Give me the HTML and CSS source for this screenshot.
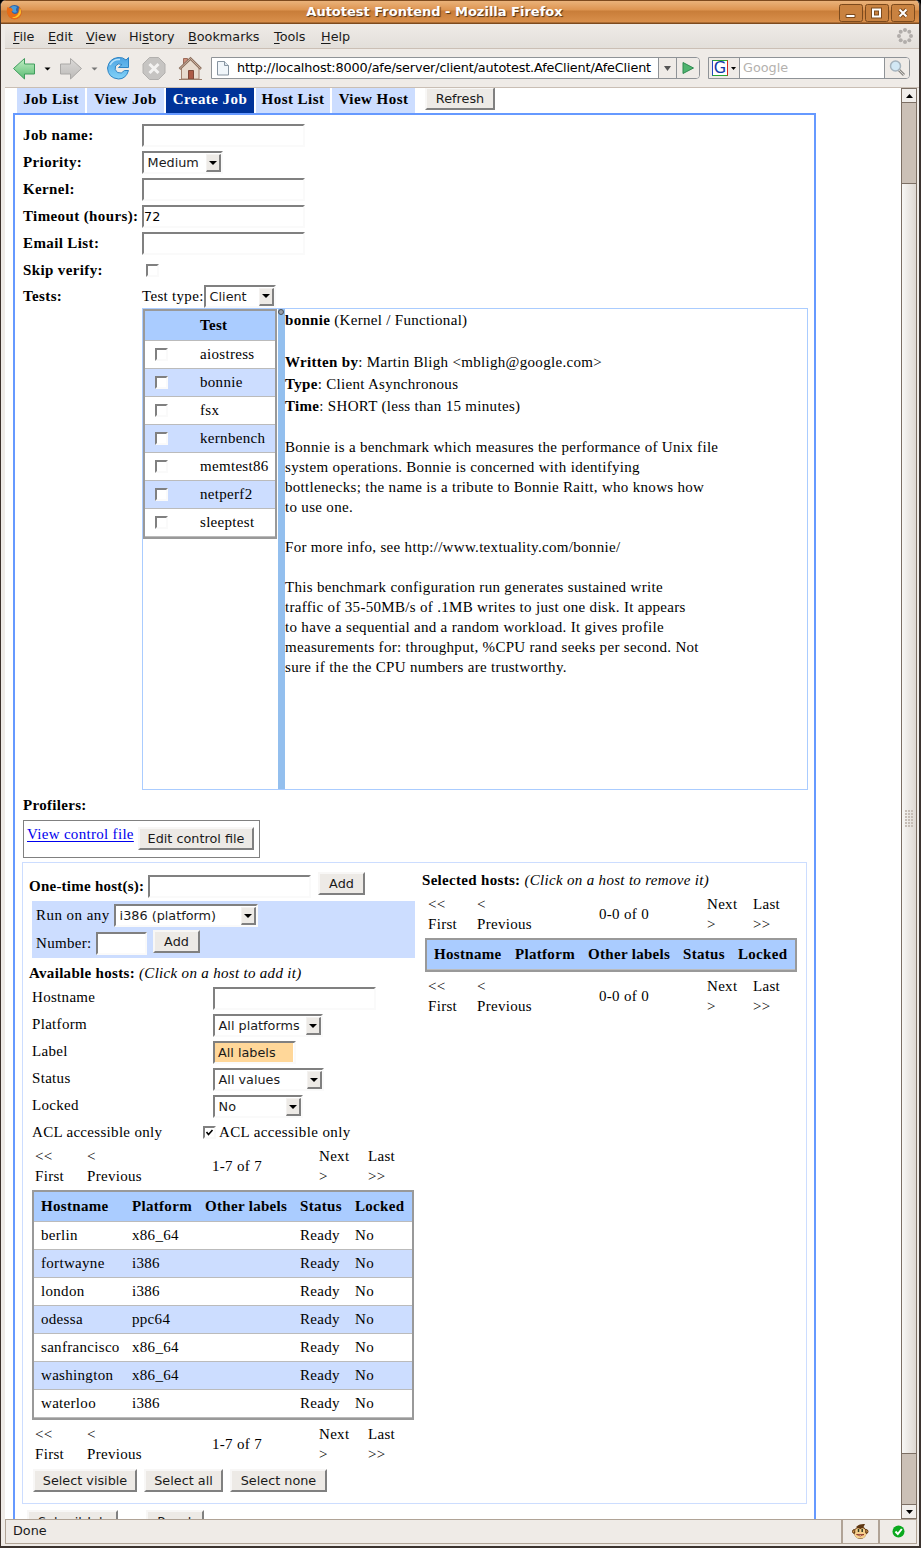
FILE: index.html
```html
<!DOCTYPE html>
<html lang="en">
<head>
<meta charset="utf-8">
<title>Autotest Frontend</title>
<link rel="stylesheet" href="styles.css">
</head>
<body>
<div class="window">
  <header class="titlebar">
    <svg class="fox" width="17" height="17" viewBox="0 0 17 17"><circle cx="8.5" cy="8" r="7" fill="#2e62a8"/><path d="M5 3 Q8 1 11 3 Q9 6 11 8 Q8 10 6 7Z" fill="#4c9bd8"/><path d="M1.5 3 Q3 4 5 3.500 L7 6 L5.500 7.500 Q7 11 11 9.500 Q13 8 12.500 5 L13.500 2.500 Q18 9 13.500 13.500 Q8 17.500 3 13 Q-.5 9 1.500 3Z" fill="#e96b14"/><path d="M14 4 Q16.500 9 12.500 12.500 Q9 15 6 13.500 Q13 13 14 4Z" fill="#fbc32c"/></svg>
    <div class="wintitle">Autotest Frontend - Mozilla Firefox</div>
    <div class="winbtns">
      <svg width="24" height="18"><rect x=".5" y=".5" width="23" height="17" rx="2"/><path d="M7 10.500h9v3h-9z" class="sym"/></svg>
      <svg width="24" height="18"><rect x=".5" y=".5" width="23" height="17" rx="2"/><path d="M8 5.500h7v7h-7z" class="symdark"/><path d="M8 5.500h7v7h-7z" class="symline"/></svg>
      <svg width="24" height="18"><rect x=".5" y=".5" width="23" height="17" rx="2"/><path d="M8.500 5.500l7 7m0-7l-7 7" class="symdark"/><path d="M8.500 5.500l7 7m0-7l-7 7" class="symline"/></svg>
    </div>
  </header>
  <nav class="menubar">
    <span class="m1"><u>F</u>ile</span><span class="m2"><u>E</u>dit</span><span class="m3"><u>V</u>iew</span><span class="m4">Hi<u>s</u>tory</span><span class="m5"><u>B</u>ookmarks</span><span class="m6"><u>T</u>ools</span><span class="m7"><u>H</u>elp</span>
    <svg class="throbber" width="16" height="16" viewBox="0 0 16 16" fill="#b1adaa"><circle cx="8" cy="2" r="2"/><circle cx="12.300" cy="3.700" r="2"/><circle cx="14" cy="8" r="2"/><circle cx="12.300" cy="12.300" r="2"/><circle cx="8" cy="14" r="2"/><circle cx="3.700" cy="12.300" r="2"/><circle cx="2" cy="8" r="2"/><circle cx="3.700" cy="3.700" r="2"/></svg>
  </nav>
  <div class="toolbar">
    <svg class="navicons" width="200" height="30" viewBox="0 0 200 30">
      <defs>
        <linearGradient id="gr" x2="0" y2="1"><stop offset="0" stop-color="#c4efc5"/><stop offset="1" stop-color="#58bb72"/></linearGradient>
        <linearGradient id="gy" x2="0" y2="1"><stop offset="0" stop-color="#dcdad8"/><stop offset="1" stop-color="#bcbab8"/></linearGradient>
        <linearGradient id="bl" x2="0" y2="1"><stop offset="0" stop-color="#4da3e2"/><stop offset="1" stop-color="#82d2f8"/></linearGradient>
      </defs>
      <path d="M8.500 15.500L19.500 5.500v5.500h10v10h-10v5z" fill="url(#gr)" stroke="#3f9c5d"/>
      <path d="M39.500 14.500h6l-3 3z" fill="#000"/>
      <path d="M76.500 15.500L65.500 5.500v5.500h-10v10h10v5z" fill="url(#gy)" stroke="#aaa8a6"/>
      <path d="M86.500 14.500h6l-3 3z" fill="#777"/>
      <path d="M121 7L123.500 4.500V14.500H113.500L117 11.500Q113 9.500 110.500 13Q109 17 112.500 19.500Q116.500 21.500 119.500 17.500H123.500Q121 26 113.500 26Q103 25 102.500 15Q104 5.500 113 4.500Q118 4 121 7Z" fill="url(#bl)" stroke="#2e84c4"/>
      <path d="M105 12Q108 6 115 6.500" fill="none" stroke="#b9e2fa" stroke-width="1.500"/>
      <path d="M144.500 4.500h9l6.500 6.500v9l-6.500 6.500h-9L138 20v-9z" fill="#c6c4c2" stroke="#b2b0ae"/><path d="M144.500 11l9 9m0-9l-9 9" stroke="#f3f2f1" stroke-width="3"/>
      <path d="M178.500 5.500h4v8h-4z" fill="#cf8f7d" stroke="#9c6a58"/>
      <path d="M176.500 15v11h17.500V15L185.500 6z" fill="#e9dccf" stroke="#a58470"/>
      <path d="M174.500 16L185.500 5.500l10.500 10.500" fill="none" stroke="#8e7260" stroke-width="2.500"/><path d="M175 15.500L185.500 5.500l10 10" fill="none" stroke="#c9ae9c"/>
      <path d="M183.500 17.500h5v8.500h-5z" fill="#ad5a45" stroke="#7f4939"/><path d="M174 26.500h23" stroke="#9d7f6c"/>
    </svg>
    <div class="urlbar">
      <svg width="12" height="15" viewBox="0 0 12 15"><path d="M.5.5h7l4 4v9.500h-11z" fill="#f1f6fa" stroke="#8794a0"/><path d="M7.500.5v4h4" fill="#dce6ee" stroke="#8794a0"/></svg>
      <span class="url">http://localhost:8000/afe/server/client/autotest.AfeClient/AfeClient</span>
      <span class="urldrop"><svg width="7" height="5"><path d="M0 0h7L3.500 5z" fill="#555"/></svg></span>
      <span class="urlgo"><svg width="12" height="12"><path d="M1 .5v11L11.500 6z" fill="#4fb46f" stroke="#2f8a50"/></svg></span>
    </div>
    <div class="search">
      <span class="engine"><span class="glogo">G</span><svg width="5" height="3"><path d="M0 0h5L2.500 3z"/></svg></span>
      <span class="query">Google</span>
      <span class="mag"><svg width="17" height="17"><path d="M10 10l5 5" stroke="#8c8986" stroke-width="3"/><path d="M10 10l5 5" stroke="#d5d3d0" stroke-width="1"/><circle cx="6.500" cy="6" r="5" fill="#d2e8f5" stroke="#a5b3bd" stroke-width="1.500"/></svg></span>
    </div>
  </div>
  <div class="viewport">
    <main class="page">
      <div class="tabs">
        <a class="t1">Job List</a><a class="t2">View Job</a><a class="t3 active">Create Job</a><a class="t4">Host List</a><a class="t5">View Host</a>
        <span class="btn refresh">Refresh</span>
      </div>
      <section class="panel">
        <div class="form">
          <b>Job name:</b><div><span class="field"></span></div>
          <b>Priority:</b><div><span class="select" style="width:81px">Medium<i></i></span></div>
          <b>Kernel:</b><div><span class="field"></span></div>
          <b>Timeout (hours):</b><div><span class="field">72</span></div>
          <b>Email List:</b><div><span class="field"></span></div>
          <b>Skip verify:</b><div><span class="check skip"></span></div>
          <b class="short">Tests:</b><div class="short"><span class="testtype">Test type:</span><span class="select" style="width:72px">Client<i></i></span></div>
        </div>
        <div class="split">
          <div class="testlist">
            <div class="tests">
              <div class="head"><b>Test</b></div>
              <div><span class="check"></span>aiostress</div>
              <div><span class="check"></span>bonnie</div>
              <div><span class="check"></span>fsx</div>
              <div><span class="check"></span>kernbench</div>
              <div><span class="check"></span>memtest86</div>
              <div><span class="check"></span>netperf2</div>
              <div><span class="check"></span>sleeptest</div>
            </div>
          </div>
          <div class="splitter"><span></span></div>
          <div class="desc">
            <p class="name"><b>bonnie</b> (Kernel / Functional)</p>
            <p class="meta"><b>Written by</b>: Martin Bligh &lt;mbligh@google.com&gt;<br><b>Type</b>: Client Asynchronous<br><b>Time</b>: SHORT (less than 15 minutes)</p>
            <p>Bonnie is a benchmark which measures the performance of Unix file<br>system operations. Bonnie is concerned with identifying<br>bottlenecks; the name is a tribute to Bonnie Raitt, who knows how<br>to use one.</p>
            <p>For more info, see http://www.textuality.com/bonnie/</p>
            <p>This benchmark configuration run generates sustained write<br>traffic of 35-50MB/s of .1MB writes to just one disk. It appears<br>to have a sequential and a random workload. It gives profile<br>measurements for: throughput, %CPU rand seeks per second. Not<br>sure if the the CPU numbers are trustworthy.</p>
          </div>
        </div>
        <b class="profilers">Profilers:</b>
        <div class="control"><a>View control file</a><span class="btn" style="width:116px">Edit control file</span></div>
        <div class="hosts">
          <div class="left">
            <div class="onetime"><b>One-time host(s):</b><span class="field"></span><span class="btn" style="width:47px">Add</span></div>
            <div class="runany">
              <div><span class="ra">Run on any</span><span class="select" style="width:144px">i386 (platform)<i></i></span></div>
              <div><span class="nu">Number:</span><span class="field num"></span><span class="btn" style="width:47px">Add</span></div>
            </div>
            <div class="avail"><b>Available hosts:</b> <em>(Click on a host to add it)</em></div>
            <div class="filters">
              <span>Hostname</span><div><span class="field"></span></div>
              <span>Platform</span><div><span class="select" style="width:110px">All platforms<i></i></span></div>
              <span>Label</span><div><span class="listbox"><span>All labels</span></span></div>
              <span>Status</span><div><span class="select" style="width:111px">All values<i></i></span></div>
              <span>Locked</span><div><span class="select" style="width:90px">No<i></i></span></div>
              <span>ACL accessible only</span><div class="acl"><span class="check"><svg width="9" height="9"><path d="M1.500 4l2 2.500L7.500 2" fill="none" stroke="#000" stroke-width="1.600"/></svg></span>ACL accessible only</div>
            </div>
            <div class="pager"><span>&lt;&lt;<br>First</span><span>&lt;<br>Previous</span><span class="count">1-7 of 7</span><span>Next<br>&gt;</span><span>Last<br>&gt;&gt;</span></div>
            <div class="table">
              <div class="head"><b>Hostname</b><b>Platform</b><b>Other labels</b><b>Status</b><b>Locked</b></div>
              <div><span>berlin</span><span>x86_64</span><span></span><span>Ready</span><span>No</span></div>
              <div><span>fortwayne</span><span>i386</span><span></span><span>Ready</span><span>No</span></div>
              <div><span>london</span><span>i386</span><span></span><span>Ready</span><span>No</span></div>
              <div><span>odessa</span><span>ppc64</span><span></span><span>Ready</span><span>No</span></div>
              <div><span>sanfrancisco</span><span>x86_64</span><span></span><span>Ready</span><span>No</span></div>
              <div><span>washington</span><span>x86_64</span><span></span><span>Ready</span><span>No</span></div>
              <div><span>waterloo</span><span>i386</span><span></span><span>Ready</span><span>No</span></div>
            </div>
            <div class="pager below"><span>&lt;&lt;<br>First</span><span>&lt;<br>Previous</span><span class="count">1-7 of 7</span><span>Next<br>&gt;</span><span>Last<br>&gt;&gt;</span></div>
            <div class="selbtns"><span class="btn" style="width:104px">Select visible</span><span class="btn" style="width:79px">Select all</span><span class="btn" style="width:97px">Select none</span></div>
          </div>
          <div class="right">
            <div class="selected"><b>Selected hosts:</b> <em>(Click on a host to remove it)</em></div>
            <div class="pager"><span>&lt;&lt;<br>First</span><span>&lt;<br>Previous</span><span class="count">0-0 of 0</span><span>Next<br>&gt;</span><span>Last<br>&gt;&gt;</span></div>
            <div class="table"><div class="head"><b>Hostname</b><b>Platform</b><b>Other labels</b><b>Status</b><b>Locked</b></div></div>
            <div class="pager below"><span>&lt;&lt;<br>First</span><span>&lt;<br>Previous</span><span class="count">0-0 of 0</span><span>Next<br>&gt;</span><span>Last<br>&gt;&gt;</span></div>
          </div>
        </div>
        <div class="submit"><span class="btn" style="width:91px">Submit Job</span><span class="btn" style="width:58px">Reset</span></div>
      </section>
    </main>
    <div class="scroll">
      <span class="sbtn"><svg width="7" height="4"><path d="M0 4h7L3.500 0z"/></svg></span>
      <span class="trough t80"></span>
      <span class="thumb"><span class="grip"></span></span>
      <span class="trough t50"></span>
      <span class="sbtn"><svg width="7" height="4"><path d="M0 0h7L3.500 4z"/></svg></span>
    </div>
  </div>
  <footer class="status">
    <span class="done">Done</span>
    <span class="cell monkey"><svg width="17" height="17" viewBox="0 0 17 17"><circle cx="2.500" cy="8.500" r="2" fill="#d39a50" stroke="#5e3611"/><circle cx="14" cy="8.500" r="2" fill="#d39a50" stroke="#5e3611"/><ellipse cx="8.300" cy="9.500" rx="6.300" ry="6.500" fill="#5e3611"/><path d="M4 4Q7 .5 13 1L11.500 4z" fill="#5e3611"/><ellipse cx="8.300" cy="11.500" rx="5.800" ry="4" fill="#f5cf8d"/><circle cx="6" cy="8" r="2.800" fill="#f5cf8d"/><circle cx="10.500" cy="8" r="2.800" fill="#f5cf8d"/><path d="M6.500 6v3M10.200 6v3" stroke="#333a22" stroke-width="1.500"/><path d="M4.500 11.500Q8.300 14.500 12 11.500Z" fill="#fff" stroke="#8b2c16" stroke-width=".8"/></svg></span>
    <span class="cell ok"><svg width="13" height="13"><circle cx="6.500" cy="6.500" r="6" fill="#0aa91e"/><path d="M3.500 6.500l2.300 2.500 4-5" fill="none" stroke="#fff" stroke-width="2"/></svg></span>
  </footer>
</div>
</body>
</html>
```
FILE: styles.css
```css
* { box-sizing: border-box; }
html, body { margin: 0; }
body { width: 921px; height: 1548px; overflow: hidden; background: #000; font: 15px/20px "Liberation Serif", serif; color: #000; }
p { margin: 0; }
svg { display: block; flex: none; }
.window { height: 1548px; display: flex; flex-direction: column; background: #efebe7; border-left: 1px solid #3e322c; border-right: 2px solid #3b332f; border-bottom: 2px solid #3b332f; border-radius: 6px 6px 0 0; overflow: hidden; }

.titlebar { height: 24px; flex: none; display: flex; align-items: center; padding: 1px 4px 0 5px; background: linear-gradient(#7d4a1e 0 1px, #eab27a 1px, #dd9450 10px, #c87d39 11px, #d98f4b 22px, #7d4a1e 23px); }
.wintitle { flex: 1; padding: 0 0 2px 7px; text-align: center; color: #fff; font: bold 13px/20px "DejaVu Sans", sans-serif; text-shadow: 1px 1px 1px #4a3018; }
.winbtns { display: flex; gap: 2px; }
.winbtns rect { fill: #c98240; stroke: #7c4a1d; }
.sym { fill: #fff; stroke: #7c4a1d; stroke-width: 1; }
.symline { fill: none; stroke: #fff; stroke-width: 2; }
.symdark { fill: none; stroke: #7c4a1d; stroke-width: 4; }

.menubar { height: 25px; flex: none; margin-left: 4px; display: flex; align-items: center; padding: 1px 0 0 8px; background: linear-gradient(#efebe7, #e3dfda); border-bottom: 1px solid #cbbfb5; font: 12.800px/22px "DejaVu Sans", sans-serif; color: #1a1a1a; }
.m1 { width: 35px; } .m2 { width: 38px; } .m3 { width: 43px; } .m4 { width: 59px; } .m5 { width: 86px; } .m6 { width: 47px; }
.menubar u { text-underline-offset: 2px; }
.throbber { margin: -1px 6px 0 auto; }
.toolbar { height: 39px; flex: none; margin-left: 4px; display: flex; align-items: center; border-bottom: 1px solid #c9beb4; font: 12.800px/20px "DejaVu Sans", sans-serif; }
.navicons { margin: -1px 6px 0 0; }
.urlbar, .search { height: 22px; display: flex; border: 1px solid #8f9397; background: #fff; border-radius: 0 4px 4px 0; overflow: hidden; }
.urlbar { width: 489px; padding-left: 5px; }
.urlbar > svg { margin-top: 3px; }
.url { width: 416px; margin-left: 8px; flex: none; white-space: nowrap; overflow: hidden; letter-spacing: -.145px; }
.urldrop, .urlgo, .engine, .mag { display: flex; align-items: center; justify-content: center; background: #efebe7; }
.urldrop { width: 18px; margin-left: 5px; border-left: 1px solid #8f9397; flex: none; }
.urlgo { flex: 1; border-left: 1px solid #8f9397; }
.search { width: 202px; margin-left: 8px; }
.engine { width: 31px; gap: 3px; border-right: 1px solid #8f9397; }
.glogo { width: 16px; height: 16px; background: #fff; border: 1px solid; border-color: #2ba532 #d8281e #2ba532 #2348c2; color: #1238a8; font: 16px/14px "DejaVu Sans", sans-serif; text-align: center; }
.query { flex: 1; padding-left: 3px; color: #b4b1ae; }
.mag { width: 25px; border-left: 1px solid #8f9397; }

.viewport { height: 1431px; flex: none; margin: 0 2px 0 4px; display: flex; background: #fff; }
.page { width: 896px; height: 1431px; overflow: hidden; padding-left: 8px; letter-spacing: .31px; }
.tabs { height: 25px; display: flex; gap: 2px; padding-left: 4px; font-weight: bold; line-height: 23px; letter-spacing: .45px; }
.tabs a { background: #ccddff; text-align: center; }
.tabs .active { background: #003399; color: #fff; }
.t1 { width: 68px; } .t2 { width: 77px; } .t3 { width: 88px; } .t4 { width: 74px; } .t5 { width: 83px; }
.btn { display: inline-block; flex: none; height: 23px; background: #edeae6; border: 2px solid; border-color: #f8f7f6 #808080 #808080 #f8f7f6; text-align: center; font: 12.800px/20px "DejaVu Sans", sans-serif; letter-spacing: 0; color: #1a1a1a; white-space: nowrap; }
.refresh { width: 70px; margin: -1px 0 0 8px; font-weight: normal; }
.panel { width: 803px; height: 1420px; border: 2px solid #6699ff; padding: 7px 0 0 7px; }

.form { display: grid; grid-template-columns: 120px 1fr; grid-template-rows: repeat(6, 27px) 24px; padding-left: 1px; line-height: 27px; }
.form b { letter-spacing: .38px; }
.form > div { display: flex; align-items: center; margin-left: -1px; }
.form .short { line-height: 24px; }
.field { display: block; width: 163px; height: 23px; background: #fff; border: 2px solid; border-color: #808080 #fafafa #fafafa #808080; font: 12.800px/19px "DejaVu Sans", sans-serif; letter-spacing: 0; flex: none; }
.select, .listbox { display: flex; justify-content: space-between; flex: none; height: 23px; background: #fff; border: 2px solid; border-color: #808080 #fafafa #fafafa #808080; font: 12.800px/19px "DejaVu Sans", sans-serif; letter-spacing: 0; padding-left: 3.600px; white-space: nowrap; color: #1a1a1a; }
.select i { width: 15px; height: 18px; margin-top: 1px; background: #edeae6; border: 1px solid #f4f2f0; border-right: 2px solid #808080; border-bottom: 2px solid #808080; display: flex; align-items: center; justify-content: center; }
.select i::after { content: ""; border: 4px solid transparent; border-top-color: #000; border-bottom: 0; }
.check { display: block; width: 13px; height: 13px; background: #fff; border: 2px solid; border-color: #808080 #fafafa #fafafa #808080; flex: none; }
.skip { margin: -1px 0 0 4px; }
.testtype { width: 62px; white-space: nowrap; }
.form .testtype { margin-top: -1px; }

.split { width: 666px; height: 482px; margin-left: 120px; display: flex; border: 1px solid #aaccff; }
.testlist { width: 135px; }
.tests { width: 134px; border: 2px solid #999; }
.tests div { height: 28px; display: flex; border-bottom: 1px solid #bbb; padding-left: 10px; line-height: 26px; }
.tests .check { margin: 7px 32px 0 0; }
.tests .head, .table .head { height: 30px; background: #aaccff; }
.tests .head { line-height: 28px; }
.tests div:nth-child(odd):not(.head), .table div:nth-child(odd):not(.head) { background: #ccddff; }
.tests .head b { margin-left: 45px; }
.splitter { width: 7px; background: #93bfee; }
.splitter span { display: block; width: 6px; height: 6px; border-radius: 3px; background: #9aa0a8; border: 1px solid #4a5058; }
.desc { white-space: nowrap; padding-top: 1px; }
.desc p { margin-bottom: 20px; }
.desc .name { margin-bottom: 21px; }
.desc .meta { line-height: 22px; margin-bottom: 20px; }
.profilers { display: block; padding-left: 1px; line-height: 30px; }
.control { width: 237px; height: 38px; margin-left: 1px; border: 1px solid #808080; display: flex; padding: 3px; }
.control a { width: 111px; color: #00e; text-decoration: underline; text-underline-offset: 2px; white-space: nowrap; }
.control .btn { margin-top: 3px; }

.hosts { width: 785px; height: 642px; margin-top: 4px; border: 1px solid #ccddff; display: flex; }
.left { width: 393px; padding: 9px 0 0 6px; }
.onetime { display: flex; height: 29px; }
.onetime b { width: 119px; line-height: 28px; white-space: nowrap; letter-spacing: .24px; }
.onetime .field { margin-top: 3px; }
.onetime .btn { margin-left: 7px; }
.runany { width: 383px; height: 57px; margin-left: 3px; padding: 3px 0 0 4px; background: #ccddff; }
.runany div { display: flex; height: 28px; }
.ra { width: 78px; line-height: 23px; white-space: nowrap; letter-spacing: .45px; }
.nu { width: 60px; line-height: 22px; }
.runany .num { width: 51px; }
.runany .btn { margin: -2px 0 0 6px; }
.avail { line-height: 30px; height: 27px; }
.filters { display: grid; grid-template-columns: 181px 1fr; grid-auto-rows: 27px; line-height: 25px; padding-left: 3px; }
.filters .field, .filters .select, .filters .listbox { margin-top: 2px; }
.listbox { width: 83px; padding: 0; }
.listbox span { width: 79px; height: 19px; padding-left: 3px; background: #ffd799; border-right: 1px solid #fff; }
.acl { display: flex; margin-left: -10px; letter-spacing: .38px; }
.acl .check { margin: 6px 3px 0 0; }
.pager { height: 44px; margin-top: -1px; display: grid; grid-template-columns: 52px 125px 107px 49px 40px; padding-left: 6px; }
.pager .count { line-height: 40px; }
.table { width: 382px; margin-left: 3px; border: 2px solid #999; }
.table > div { height: 28px; display: grid; grid-template-columns: 91px 73px 95px 55px 1fr; padding-left: 7px; border-bottom: 1px solid #bbb; line-height: 27px; }
.table .head { line-height: 29px; }
.pager.below { margin-top: 4px; height: 45px; }
.selbtns { display: flex; gap: 7px; padding-left: 4px; }
.right { padding: 7px 0 0 6px; }
.selected { line-height: 20px; height: 24px; }
.right .pager { grid-template-columns: 49px 122px 108px 46px 40px; height: 44px; }
.right .pager:not(.below) { margin-top: 0; }
.right .table { width: 372px; }
.right .table > div { grid-template-columns: 81px 73px 95px 55px 1fr; }
.submit { display: flex; gap: 28px; margin-top: 6px; padding-left: 5px; }

.scroll { flex: 1; display: flex; flex-direction: column; border: 1px solid #7c6f64; border-width: 0 1px; }
.sbtn { height: 15px; display: flex; align-items: center; justify-content: center; background: #f1eeeb; border: 1px solid #7c6f64; border-width: 1px 0; }
.trough { background: #cbc0b6; }
.t80 { height: 80px; } .t50 { height: 50px; }
.thumb { flex: 1; display: flex; align-items: center; justify-content: center; border: 1px solid #7c6f64; border-width: 1px 0; background: linear-gradient(90deg, #f8f7f5, #ded8d2); }
.grip { width: 8px; height: 18px; background: radial-gradient(circle at 1px 1px, #c6bdb5 .8px, #fff 1px, transparent 1.500px) 0 0 / 3px 3px; }
.status { height: 25px; flex: none; margin: 0 2px 0 4px; display: flex; font: 12.800px/22px "DejaVu Sans", sans-serif; border: 1px solid #b0a396; color: #1a1a1a; }
.done { width: 836px; padding-left: 7px; border-right: 1px solid #b0a396; }
.cell { width: 38px; display: flex; align-items: center; justify-content: center; }
.monkey { border-right: 2px solid #b0a396; border-left: 1px solid #b0a396; }
.ok { flex: 1; }
```
